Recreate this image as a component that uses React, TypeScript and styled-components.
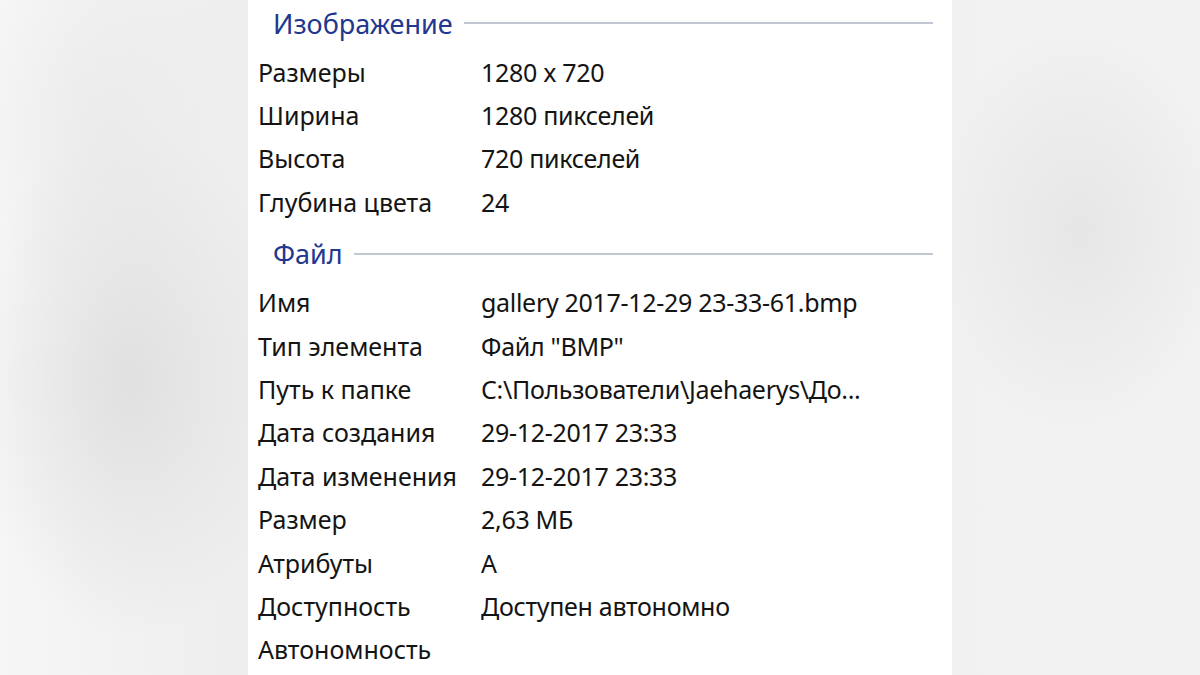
import React from 'react';
import styled, { createGlobalStyle } from 'styled-components';

const GlobalStyle = createGlobalStyle`
  html, body {
    margin: 0;
    padding: 0;
    height: 100%;
  }
  body {
    background: #f4f4f4;
    font-family: 'Noto Sans', 'Open Sans', sans-serif;
  }
`;

const Page = styled.div`
  width: 1200px;
  height: 675px;
  display: flex;
  justify-content: center;
  overflow: hidden;
  background:
    radial-gradient(ellipse 160px 260px at 130px 380px, #e0e0e0, rgba(224, 224, 224, 0) 100%),
    radial-gradient(ellipse 140px 200px at 110px 130px, #ebebeb, rgba(235, 235, 235, 0) 100%),
    radial-gradient(ellipse 150px 200px at 1080px 230px, #e6e6e6, rgba(230, 230, 230, 0) 100%),
    linear-gradient(90deg, #f6f6f6 0%, #eeeeee 20%, #f2f2f2 100%);
`;

const Panel = styled.div`
  width: 704px;
  height: 100%;
  background: #ffffff;
  padding: 0 19px 0 10px;
  box-sizing: border-box;
  color: #141414;
`;

const Section = styled.section<{ $top: number }>`
  display: flex;
  flex-direction: column;
  margin-top: ${(p) => p.$top}px;
`;

const Header = styled.div`
  height: 46px;
  display: flex;
  align-items: center;
  gap: 11px;
  padding-left: 15px;
  margin-bottom: 4px;
`;

const HeaderTitle = styled.span`
  color: #22378e;
  font-size: 27px;
  white-space: nowrap;
`;

const HeaderLine = styled.div`
  flex: 1;
  height: 2px;
  background: #c2c7d1;
`;

const Row = styled.div`
  height: 43.4px;
  display: grid;
  grid-template-columns: 223px 1fr;
  align-items: center;
  font-size: 25px;
  white-space: nowrap;
`;

const Label = styled.span``;

const Value = styled.span`
  overflow: hidden;
  letter-spacing: -0.3px;
`;

type Item = [string, string];

const image: Item[] = [
  ['Размеры', '1280 x 720'],
  ['Ширина', '1280 пикселей'],
  ['Высота', '720 пикселей'],
  ['Глубина цвета', '24'],
];

const file: Item[] = [
  ['Имя', 'gallery 2017-12-29 23-33-61.bmp'],
  ['Тип элемента', 'Файл "BMP"'],
  ['Путь к папке', 'C:\\Пользователи\\Jaehaerys\\До...'],
  ['Дата создания', '29-12-2017 23:33'],
  ['Дата изменения', '29-12-2017 23:33'],
  ['Размер', '2,63 МБ'],
  ['Атрибуты', 'A'],
  ['Доступность', 'Доступен автономно'],
  ['Автономность', ''],
];

const Group = ({ title, items, top }: { title: string; items: Item[]; top: number }) => (
  <Section $top={top}>
    <Header>
      <HeaderTitle>{title}</HeaderTitle>
      <HeaderLine />
    </Header>
    {items.map(([k, v]) => (
      <Row key={k}>
        <Label>{k}</Label>
        <Value>{v}</Value>
      </Row>
    ))}
  </Section>
);

export default function App() {
  return (
    <>
      <GlobalStyle />
      <Page>
        <Panel>
          <Group title="Изображение" items={image} top={0} />
          <Group title="Файл" items={file} top={7} />
        </Panel>
      </Page>
    </>
  );
}
